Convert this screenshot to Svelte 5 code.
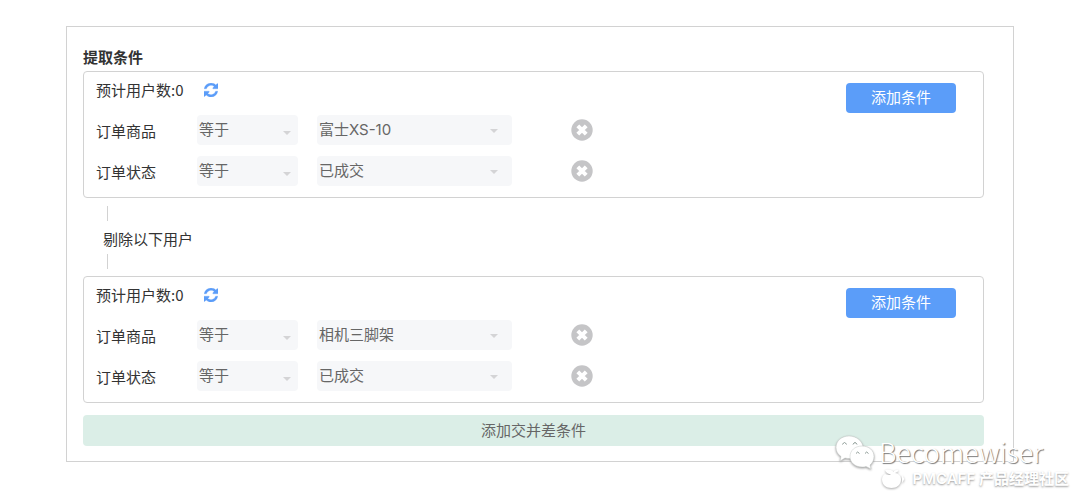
<script lang="ts">
  interface Condition {
    field: string;
    operator: string;
    value: string;
  }

  interface Group {
    id: number;
    users: number;
    conditions: Condition[];
  }

  const operators = ['等于', '不等于'];
  const options: Record<string, string[]> = {
    订单商品: ['富士XS-10', '相机三脚架'],
    订单状态: ['已成交', '待付款'],
  };

  let nextId = 3;

  let groups = $state<Group[]>([
    {
      id: 1,
      users: 0,
      conditions: [
        { field: '订单商品', operator: '等于', value: '富士XS-10' },
        { field: '订单状态', operator: '等于', value: '已成交' },
      ],
    },
    {
      id: 2,
      users: 0,
      conditions: [
        { field: '订单商品', operator: '等于', value: '相机三脚架' },
        { field: '订单状态', operator: '等于', value: '已成交' },
      ],
    },
  ]);

  function addCondition(group: Group) {
    group.conditions.push({ field: '订单状态', operator: '等于', value: '已成交' });
  }

  function addGroup() {
    groups.push({ id: nextId++, users: 0, conditions: [] });
  }
</script>

<div class="page">
  <main class="panel">
    <h1 class="title">提取条件</h1>

    {#each groups as group, g (group.id)}
      {#if g > 0}
        <div class="connector">
          <span class="connector-line"></span>
          <span class="connector-text">剔除以下用户</span>
          <span class="connector-line"></span>
        </div>
      {/if}

      <section class="group">
        <div class="group-body">
          <div class="group-head">
            <span>预计用户数:{group.users}</span>
            <button class="icon-button" type="button" aria-label="刷新">
              <svg class="refresh" viewBox="0 0 1536 1536">
                <path d="M1511 928q0 5-1 7-64 268-268 434.500t-478 166.500q-146 0-282.500-55t-243.500-157l-129 129q-19 19-45 19t-45-19-19-45v-448q0-26 19-45t45-19h448q26 0 45 19t19 45-19 45l-137 137q71 66 161 102t187 36q134 0 250-65t186-179q11-17 53-117 8-23 30-23h192q13 0 22.500 9.500t9.500 22.500zM1536 128v448q0 26-19 45t-45 19h-448q-26 0-45-19t-19-45 19-45l138-138q-148-137-349-137-134 0-250 65t-186 179q-11 17-53 117-8 23-30 23h-199q-13 0-22.500-9.500t-9.500-22.500v-7q65-268 270-434.500t480-166.500q146 0 284 55.500t245 156.500l130-129q19-19 45-19t45 19 19 45z" />
              </svg>
            </button>
          </div>

          <div class="rows">
            {#each group.conditions as condition, i}
              <div class="row">
                <label class="field" for="value-{group.id}-{i}">{condition.field}</label>
                <div class="select operator">
                  <select aria-label="{condition.field}条件" bind:value={condition.operator}>
                    {#each operators as operator}
                      <option>{operator}</option>
                    {/each}
                  </select>
                  <svg class="caret" viewBox="0 0 8 4"><path d="M0 0h8L4 4z" /></svg>
                </div>
                <div class="select value">
                  <select id="value-{group.id}-{i}" bind:value={condition.value}>
                    {#each options[condition.field] as option}
                      <option>{option}</option>
                    {/each}
                  </select>
                  <svg class="caret" viewBox="0 0 8 4"><path d="M0 0h8L4 4z" /></svg>
                </div>
                <button
                  class="icon-button"
                  type="button"
                  aria-label="删除"
                  onclick={() => group.conditions.splice(i, 1)}
                >
                  <svg class="remove" viewBox="0 0 22 22">
                    <circle cx="11" cy="11" r="10.700" />
                    <path d="M6.800 6.800l8.400 8.400M15.200 6.800l-8.400 8.400" />
                  </svg>
                </button>
              </div>
            {/each}
          </div>
        </div>
        <button class="add-condition" type="button" onclick={() => addCondition(group)}>添加条件</button>
      </section>
    {/each}

    <button class="add-group" type="button" onclick={addGroup}>添加交并差条件</button>
  </main>

  <div class="watermark">
    <div class="mark author">
      <svg class="wechat" viewBox="0 0 40 34">
        <path class="bubble" d="M14 1C6.500 1 1 6 1 12.500c0 4 2 7 5 9L5 26l5-3c1.500.400 3 .500 5 .500 7 0 13-5 13-11S21.500 1 14 1z" />
        <path class="bubble" d="M27 11c-7 0-12 4.500-12 10.500S20 32 27 32c1.500 0 3-.200 4-.600l5 2.600-1-4c2.500-2 4-5 4-8.500C39 15.500 34 11 27 11z" />
        <g class="eyes">
          <path d="M7.500 9.500q2-4 4 0M18 9.500q2-4 4 0M21 18.500q1.500-3 3.500 0M30 18.500q1.500-3 3.500 0" />
        </g>
      </svg>
      <span>Becomewiser</span>
    </div>
    <div class="mark site">
      <svg class="logo" viewBox="0 0 24 20">
        <path d="M4 1c5-1 7 0 8.500 2 1-2 3-2.500 5-2-.500 1.500-1.500 2.500-3.500 3 4 .500 6 3.500 6 6.500 0 5-4 8.500-9.500 8.500C5 19 1 15.500 1 10.500 1 8 2 6 4 5c2 1 4 1.500 6 .500C7.500 5 5 4 4 1z" />
        <path d="M21 6l2.500 4-2.500 4z" />
      </svg>
      <span>PMCAFF 产品经理社区</span>
    </div>
  </div>
</div>

<style>
  :global(body) {
    margin: 0;
    background: #fff;
  }

  .page {
    position: relative;
    box-sizing: border-box;
    min-height: 100vh;
    padding: 26px 66px 38px;
    font-family: 'Noto Sans CJK SC', sans-serif;
    font-size: 15px;
    line-height: 20px;
    color: #333;
  }

  .panel {
    padding: 20px 29px 15px 16px;
    border: 1px solid #d2d2d2;
  }

  .title {
    margin: 0 0 4px;
    font-size: 15px;
    font-weight: 700;
    line-height: 20px;
  }

  button,
  select {
    margin: 0;
    padding: 0;
    border: 0;
    font: inherit;
    color: inherit;
    cursor: pointer;
  }

  .group {
    display: flex;
    align-items: flex-start;
    padding: 11px 27px 11px 12px;
    border: 1px solid #d2d2d2;
    border-radius: 4px;
  }

  .group-body {
    flex: 1;
  }

  .group-head {
    display: flex;
    align-items: center;
    gap: 20px;
    height: 14px;
    margin-bottom: 18px;
  }

  .icon-button {
    display: flex;
    background: none;
  }

  .refresh {
    width: 14px;
    height: 14px;
    fill: #5b9df9;
    stroke: #5b9df9;
    stroke-width: 30;
  }

  .rows {
    display: grid;
    gap: 11px;
  }

  .row {
    display: flex;
    align-items: center;
  }

  .field {
    width: 101px;
    padding-top: 2px;
  }

  .select {
    position: relative;
    height: 30px;
  }

  .operator {
    width: 101px;
    margin-right: 19px;
  }

  .value {
    width: 195px;
    margin-right: 59px;
  }

  .select select {
    appearance: none;
    width: 100%;
    height: 30px;
    padding: 0 24px 0 2px;
    border-radius: 4px;
    background: #f6f7f9;
    font-family: Inter, 'Noto Sans CJK SC', sans-serif;
    color: #666;
  }

  .caret {
    position: absolute;
    top: 14px;
    right: 14px;
    width: 8px;
    height: 4px;
    fill: #d4d4d6;
    pointer-events: none;
  }

  .operator .caret {
    top: 16px;
    right: 7px;
  }

  .remove {
    width: 22px;
    height: 22px;
    fill: #c5c5c7;
  }

  .remove path {
    stroke: #fff;
    stroke-width: 4;
  }

  .add-condition {
    width: 110px;
    height: 30px;
    padding-bottom: 2px;
    border-radius: 4px;
    background: #5b9df9;
    color: #fff;
  }

  .connector {
    display: flex;
    flex-direction: column;
    align-items: flex-start;
    padding: 8px 20px 7px;
  }

  .connector-line {
    width: 1px;
    height: 15px;
    margin-left: 4px;
    background: #d2d2d2;
  }

  .connector-text {
    padding-top: 2px;
    line-height: 31px;
  }

  .add-group {
    display: block;
    width: 100%;
    height: 31px;
    margin-top: 12px;
    padding-bottom: 2px;
    border-radius: 4px;
    background: #dbeee7;
    color: #666;
  }

  .watermark {
    position: absolute;
    right: 11px;
    bottom: 11px;
    display: flex;
    flex-direction: column;
    align-items: flex-end;
    color: #fff;
    pointer-events: none;
  }

  .mark {
    display: flex;
    align-items: center;
    fill: #fff;
  }

  .author {
    gap: 4px;
    margin-right: 26px;
    font-size: 27px;
    font-weight: 300;
    line-height: 34px;
    text-shadow: 1px 1px 1px #777;
  }

  .wechat {
    width: 40px;
    height: 34px;
    overflow: visible;
    filter: drop-shadow(0 1px 1px #999);
  }

  .bubble {
    stroke: #c4c8c6;
    stroke-width: 0.500;
  }

  .eyes {
    fill: none;
    stroke: #8d9b96;
  }

  .site {
    gap: 7px;
    font-family: Inter, 'Noto Sans CJK SC', sans-serif;
    font-weight: 600;
    text-shadow: 0 1px 2px #999;
  }

  .logo {
    width: 24px;
    height: 20px;
    filter: drop-shadow(0 1px 1px #aaa);
  }
</style>
